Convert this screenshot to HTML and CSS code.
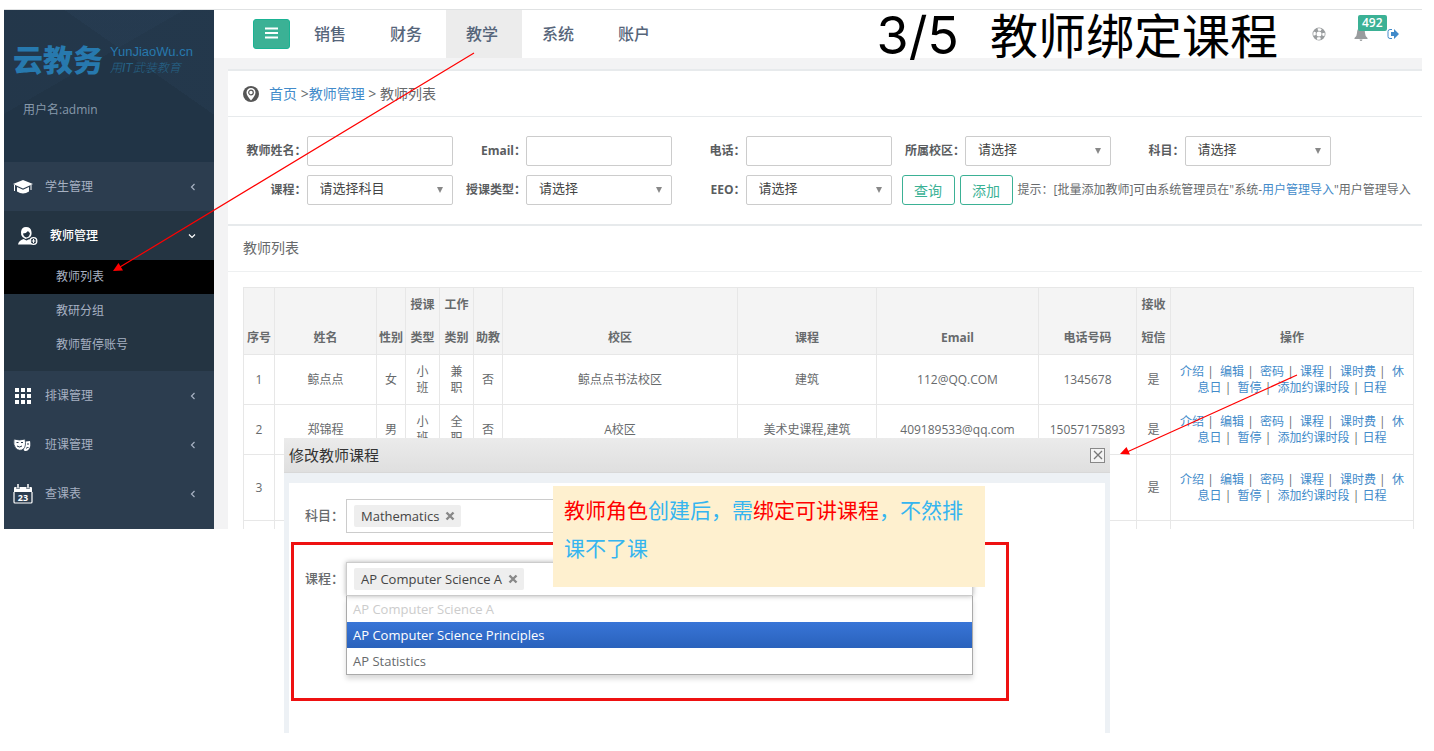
FILE: index.html
```html
<!DOCTYPE html>
<html lang="zh-CN">
  <head>
    <meta charset="UTF-8" />
    <meta name="viewport" content="width=device-width, initial-scale=1.0" />
    <title>教师列表</title>
    <link rel="stylesheet" href="styles.css">
  </head>
  <body>
    <div class="app">
      <aside class="sidebar">
        <div class="profile">
          <div class="logo">
            <strong>云教务</strong>
            <div class="slogan">
              <span>YunJiaoWu.cn</span>
              <em>用IT武装教育</em>
            </div>
          </div>
          <p class="user">用户名:admin</p>
        </div>

        <ul class="menu">
          <li>
            <a href="#">
              <svg width="20" height="16" viewBox="0 0 20 16"><path d="M10 1L0 5l10 4.500L20 5z" fill="#fff" /><path d="M4 8v4.500q6 4 12 0V8l-6 2.800z" fill="#fff" /><path d="M1.500 6v6M18 6v5" stroke="#fff" /></svg>
              学生管理
              <svg class="arrow" width="6" height="8" viewBox="0 0 6 8"><path d="M4.500 1l-3 3 3 3" /></svg>
            </a>
          </li>
          <li class="open">
            <a href="#">
              <svg width="20" height="20" viewBox="0 0 20 20"><path d="M8 1Q3.500 1 3 6q-.3 3 1.500 5l3 2 4-1.500q2.500-2 2-5.500Q13 1 8 1z" fill="#fff" /><path d="M5 7.500q3 0 5-2.500 1 1.500 2 2-.5 4-3.500 4.500Q5.500 11 5 7.500z" fill="#243442" /><path d="M0 18.500q.5-4 5.500-5.500l3 1.500 3-1.500 2 5.500z" fill="#fff" /><circle cx="15.500" cy="15" r="3.300" fill="#243442" stroke="#fff" stroke-width="1.300" /><path d="M13.500 15h4M15.500 13v4" stroke="#fff" /></svg>
              教师管理
              <svg class="arrow" width="8" height="6" viewBox="0 0 8 6"><path d="M1 1.500l3 3 3-3" /></svg>
            </a>
            <ul class="submenu">
              <li class="active"><a href="#">教师列表</a></li>
              <li><a href="#">教研分组</a></li>
              <li><a href="#">教师暂停账号</a></li>
            </ul>
          </li>
          <li>
            <a href="#">
              <svg width="20" height="18" viewBox="0 0 20 18"><path d="M1 0h4v4H1zM7 0h4v4H7zM13 0h4v4h-4zM1 6h4v4H1zM7 6h4v4H7zM13 6h4v4h-4zM1 12h4v4H1zM7 12h4v4H7zM13 12h4v4h-4z" transform="translate(1 1)" fill="#fff" /></svg>
              排课管理
              <svg class="arrow" width="6" height="8" viewBox="0 0 6 8"><path d="M4.500 1l-3 3 3 3" /></svg>
            </a>
          </li>
          <li>
            <a href="#">
              <svg width="20" height="16" viewBox="0 0 20 16"><path d="M9 5l8-1q1 5-1 8-2 3-5 1.500z" fill="#fff" /><path d="M1 2q5.500 2 11 0 1.500 7-1.500 10Q6.500 15 2.500 11 0 8 1 2z" fill="#fff" stroke="#2c3d4f" stroke-width=".8" /><path d="M3.500 5.500h2M8 5.500h2M4 9q2.500 2 5 0M14 7h2M13 11.500q1-1.500 2.500-1" stroke="#2c3d4f" fill="none" /></svg>
              班课管理
              <svg class="arrow" width="6" height="8" viewBox="0 0 6 8"><path d="M4.500 1l-3 3 3 3" /></svg>
            </a>
          </li>
          <li>
            <a href="#">
              <svg width="20" height="20" viewBox="0 0 20 20"><path d="M1 8V4q0-1 1-1h16q1 0 1 1v4z" fill="#fff" /><path d="M5 0v5M15 0v5" stroke="#2c3d4f" stroke-width="3" /><path d="M5 0v4.500M15 0v4.500" stroke="#fff" stroke-width="1.500" /><path d="M1 8v10q0 1 1 1h16q1 0 1-1V8" fill="none" stroke="#fff" stroke-width="1.200" /><text x="10" y="17" text-anchor="middle" font-size="9" font-weight="700" fill="#fff">23</text></svg>
              查课表
              <svg class="arrow" width="6" height="8" viewBox="0 0 6 8"><path d="M4.500 1l-3 3 3 3" /></svg>
            </a>
          </li>
        </ul>
      </aside>

      <main class="main">
        <header class="topbar">
          <button class="toggle" type="button" aria-label="菜单">
            <svg width="14" height="12" viewBox="0 0 14 12"><path d="M0 1.500h13M0 6h13M0 10.500h13" stroke="#fff" stroke-width="2" /></svg>
          </button>
          <nav class="nav">
            <a href="#">销售</a>
            <a href="#">财务</a>
            <a class="active" href="#">教学</a>
            <a href="#">系统</a>
            <a href="#">账户</a>
          </nav>
          <h1 class="step"><span>3/5</span>&nbsp; 教师绑定课程</h1>
          <div class="tools">
            <a href="#" aria-label="帮助"><svg width="14" height="14" viewBox="0 0 14 14" fill="none"><circle cx="7" cy="7" r="4.500" stroke="#999c9e" stroke-width="4" /><circle cx="7" cy="7" r="4.500" stroke="#fff" stroke-width="2.400" stroke-dasharray="3.530" stroke-dashoffset="1.760" /></svg></a>
            <a class="bell" href="#" aria-label="消息"><svg width="14" height="14" viewBox="0 0 14 14"><path d="M7 0q4 1 4 6 0 3 2.500 5v1H.5v-1Q3 9 3 6q0-5 4-6zM5.500 12.500h3q-.3 1.500-1.500 1.500t-1.500-1.500z" fill="#999c9e" /></svg><span class="badge">492</span></a>
            <a class="exit" href="#" aria-label="退出"><svg width="12" height="12" viewBox="0 0 12 12"><path d="M5 1.500H3Q1 1.500 1 3.500v5q0 2 2 2h2" fill="none" stroke="#428bca" /><path d="M4 4h3V1l5 5-5 5V8H4z" fill="#428bca" /></svg></a>
          </div>
        </header>

        <div class="content">
          <section class="panel">
            <div class="crumbs">
              <svg width="16" height="16" viewBox="0 0 16 16"><circle cx="8" cy="8" r="8" fill="#555" /><path d="M8 14.500Q3.500 9.500 3.500 6.500a4.500 4.500 0 0 1 9 0Q12.500 9.500 8 14.500z" fill="#fff" /><circle cx="8" cy="6.500" r="2.300" fill="none" stroke="#555" stroke-width="1.200" /></svg>
              <p><a href="#">首页</a> &gt;<a href="#">教师管理</a> &gt; 教师列表</p>
            </div>

            <form class="search">
              <div class="line">
                <div class="field"><label for="name">教师姓名：</label><input id="name" type="text"></div>
                <div class="field"><label for="email">Email：</label><input id="email" type="text"></div>
                <div class="field"><label for="phone">电话：</label><input id="phone" type="text"></div>
                <div class="field"><label for="campus">所属校区：</label><select id="campus"><option>请选择</option></select></div>
                <div class="field"><label for="subject">科目：</label><select id="subject"><option>请选择</option></select></div>
              </div>
              <div class="line">
                <div class="field"><label for="course">课程：</label><select id="course"><option>请选择科目</option></select></div>
                <div class="field"><label for="type">授课类型：</label><select id="type"><option>请选择</option></select></div>
                <div class="field"><label for="eeo">EEO：</label><select id="eeo"><option>请选择</option></select></div>
                <div class="actions">
                  <button type="button">查询</button>
                  <button type="button">添加</button>
                  <span>提示：[批量添加教师]可由系统管理员在"系统-<a href="#">用户管理导入</a>"用户管理导入</span>
                </div>
              </div>
            </form>
          </section>

          <section class="panel list">
            <h2>教师列表</h2>
            <div class="tablebox">
              <table>
                <colgroup>
                  <col class="c-no"><col class="c-name"><col class="c-sex"><col class="c-type"><col class="c-type"><col class="c-sex"><col><col class="c-course"><col class="c-email"><col class="c-phone"><col class="c-type"><col class="c-ops">
                </colgroup>
                <thead>
                  <tr>
                    <th>序号</th>
                    <th>姓名</th>
                    <th>性别</th>
                    <th>授课<br>类型</th>
                    <th>工作<br>类别</th>
                    <th>助教</th>
                    <th>校区</th>
                    <th>课程</th>
                    <th>Email</th>
                    <th>电话号码</th>
                    <th>接收<br>短信</th>
                    <th>操作</th>
                  </tr>
                </thead>
                <tbody>
                  <tr>
                    <td>1</td>
                    <td>鲸点点</td>
                    <td>女</td>
                    <td>小<br>班</td>
                    <td>兼<br>职</td>
                    <td>否</td>
                    <td>鲸点点书法校区</td>
                    <td>建筑</td>
                    <td>112@QQ.COM</td>
                    <td>1345678</td>
                    <td>是</td>
                    <td class="ops"><a href="#">介绍</a> |&nbsp; <a href="#">编辑</a> |&nbsp; <a href="#">密码</a> |&nbsp; <a href="#">课程</a> |&nbsp; <a href="#">课时费</a> |&nbsp; <a href="#">休息日</a> |&nbsp; <a href="#">暂停</a> |&nbsp; <a href="#">添加约课时段</a> | <a href="#">日程</a></td>
                  </tr>
                  <tr>
                    <td>2</td>
                    <td>郑锦程</td>
                    <td>男</td>
                    <td>小<br>班</td>
                    <td>全<br>职</td>
                    <td>否</td>
                    <td>A校区</td>
                    <td>美术史课程,建筑</td>
                    <td>409189533@qq.com</td>
                    <td>15057175893</td>
                    <td>是</td>
                    <td class="ops"><a href="#">介绍</a> |&nbsp; <a href="#">编辑</a> |&nbsp; <a href="#">密码</a> |&nbsp; <a href="#">课程</a> |&nbsp; <a href="#">课时费</a> |&nbsp; <a href="#">休息日</a> |&nbsp; <a href="#">暂停</a> |&nbsp; <a href="#">添加约课时段</a> | <a href="#">日程</a></td>
                  </tr>
                  <tr class="tall">
                    <td>3</td>
                    <td></td>
                    <td></td>
                    <td></td>
                    <td></td>
                    <td></td>
                    <td></td>
                    <td></td>
                    <td></td>
                    <td></td>
                    <td>是</td>
                    <td class="ops"><a href="#">介绍</a> |&nbsp; <a href="#">编辑</a> |&nbsp; <a href="#">密码</a> |&nbsp; <a href="#">课程</a> |&nbsp; <a href="#">课时费</a> |&nbsp; <a href="#">休息日</a> |&nbsp; <a href="#">暂停</a> |&nbsp; <a href="#">添加约课时段</a> | <a href="#">日程</a></td>
                  </tr>
                  <tr class="rest">
                    <td></td><td></td><td></td><td></td><td></td><td></td><td></td><td></td><td></td><td></td><td></td><td></td>
                  </tr>
                </tbody>
              </table>
            </div>
          </section>
        </div>
      </main>
    </div>

    <div class="modal" role="dialog" aria-labelledby="modal-title">
      <div class="modal-head">
        <h3 id="modal-title">修改教师课程</h3>
        <button type="button" aria-label="关闭"><svg width="10" height="10" viewBox="0 0 10 10"><path d="M1 1l8 8M9 1L1 9" stroke="#777" stroke-width="1.300" /></svg></button>
      </div>
      <div class="modal-body">
        <div class="row">
          <label for="m-subject">科目：</label>
          <div class="chosen">
            <span class="chip">Mathematics <button type="button" aria-label="移除"><svg width="10" height="10" viewBox="0 0 10 10"><path d="M1.500 1.500l7 7M8.500 1.500l-7 7" /></svg></button></span>
            <input id="m-subject" type="text">
          </div>
        </div>
        <div class="row marked">
          <label for="m-course">课程：</label>
          <div class="picker">
            <div class="chosen focus">
              <span class="chip">AP Computer Science A <button type="button" aria-label="移除"><svg width="10" height="10" viewBox="0 0 10 10"><path d="M1.500 1.500l7 7M8.500 1.500l-7 7" /></svg></button></span>
              <input id="m-course" type="text">
            </div>
            <ul class="options">
              <li class="used">AP Computer Science A</li>
              <li class="hover">AP Computer Science Principles</li>
              <li>AP Statistics</li>
            </ul>
          </div>
        </div>
      </div>
    </div>

    <p class="note"><b>教师角色</b>创建后，需<b>绑定可讲课程</b>，不然排课不了课</p>

    <svg class="lines" width="1434" height="751" viewBox="0 0 1434 751">
      <path d="M474 53L120 267M1297 375L1127 452" stroke="#f00" stroke-width="1.200" />
      <path d="M113 271l5.500-8 4.500 7.500zM1120 454l6.500-7 3.500 7.500z" fill="#f00" />
    </svg>
  </body>
</html>
```

FILE: styles.css
```css
* {
  box-sizing: border-box;
  margin: 0;
  padding: 0;
}

body {
  position: relative;
  min-height: 100vh;
  padding: 9px 12px 0 4px;
  background: #fff;
  color: #676a6c;
  font-family: "Open Sans", "Noto Sans CJK SC", sans-serif;
  font-size: 12px;
  line-height: 16px;
}

ul {
  list-style: none;
}

a {
  color: #428bca;
  text-decoration: none;
}

button,
input,
select {
  font-family: inherit;
}

.app {
  display: grid;
  grid-template-columns: 210px 1fr;
  border-top: 1px solid #e0e2e3;
}

/* sidebar */
.sidebar {
  padding-bottom: 11px;
  background: #2c3d4f;
}

.profile {
  height: 152px;
  padding: 32px 8px 0 9px;
  background:
    linear-gradient(35deg, transparent 65%, rgba(60, 90, 125, 0.1) 65%),
    linear-gradient(150deg, rgba(60, 90, 125, 0.08) 38%, transparent 38%),
    #213446;
}

.logo {
  display: flex;
  align-items: center;
  gap: 7px;
  color: #2779ae;
}

.logo strong {
  font-size: 30px;
  font-weight: 900;
  line-height: 36px;
}

.slogan {
  font-family: "Liberation Sans", "Noto Sans CJK SC", sans-serif;
  font-size: 13px;
}

.slogan span,
.slogan em {
  display: block;
  white-space: nowrap;
}

.slogan em {
  color: #266489;
  font-size: 12px;
  font-weight: 300;
}

.user {
  padding: 24px 10px 0;
  color: #8799ab;
}

.menu a {
  display: flex;
  align-items: center;
  gap: 12px;
  height: 49px;
  padding: 0 18px 0 9px;
  color: #a7b1c2;
}

.menu .arrow {
  margin-left: auto;
  fill: none;
  stroke: #a7b1c2;
  stroke-width: 1.2;
}

.menu .open {
  padding-bottom: 9px;
  background: #243442;
}

.menu .open > a {
  padding-left: 14px;
  color: #fff;
  font-weight: 500;
}

.menu .open .arrow {
  stroke: #fff;
}

.menu .submenu a {
  height: 34px;
  padding-left: 52px;
}

.submenu .active {
  background: #000;
}

/* top bar */
.topbar {
  display: flex;
  align-items: center;
  height: 48px;
  padding: 0 23px 0 39px;
}

.toggle {
  width: 37px;
  height: 30px;
  margin-right: 4px;
  border: 1px solid #1ab394;
  border-radius: 3px;
  background: #3bb195;
}

.nav {
  display: flex;
}

.nav a {
  padding: 0 24px 0 20px;
  color: #56657a;
  font-size: 16px;
  font-weight: 500;
  line-height: 48px;
}

.nav .active {
  background: #ececec;
}

.step {
  margin-left: auto;
  padding-top: 4px;
  color: #000;
  font-family: Inter, "Noto Sans CJK SC", sans-serif;
  font-size: 48px;
  font-weight: 400;
  line-height: 48px;
  white-space: nowrap;
}

.step span {
  padding-right: 4px;
  font-size: 52px;
}

.tools {
  display: flex;
  align-items: center;
  margin-left: 34px;
}

.tools a {
  display: flex;
}

.tools .bell {
  position: relative;
  margin-left: 28px;
}

.tools .exit {
  margin-left: 19px;
}

.badge {
  position: absolute;
  top: -12px;
  left: 4px;
  padding: 0 4px;
  border-radius: 2px;
  background: #3bb195;
  color: #fff;
  font-weight: 600;
}

/* content */
.content {
  padding: 11px 0 0 14px;
  background: #f3f3f4;
}

.panel {
  border-top: 2px solid #e7eaec;
  background: #fff;
}

.crumbs {
  display: flex;
  align-items: center;
  gap: 10px;
  height: 46px;
  padding: 0 15px;
  border-bottom: 1px solid #e7eaec;
  font-size: 14px;
}

.search {
  display: grid;
  gap: 9px;
  padding: 19px 0 19px 5px;
}

.line {
  display: grid;
  grid-template-columns: repeat(5, 24fr) 10fr;
}

.field {
  display: flex;
  align-items: center;
  justify-content: flex-end;
}

.field label {
  color: #5a5d5f;
  font-weight: 700;
}

.field input,
.field select {
  width: 146px;
  height: 30px;
  padding: 0 12px;
  border: 1px solid #ccc;
  border-radius: 2px;
  background: #fff;
  color: #444;
  font-size: 13px;
}

.field select {
  padding-bottom: 4px;
  appearance: none;
  background: #fff url("data:image/svg+xml,%3Csvg xmlns='http://www.w3.org/2000/svg' width='8' height='6'%3E%3Cpath d='M1 0h6L4 6z' fill='%23888'/%3E%3C/svg%3E") no-repeat right 8px center;
}

.actions {
  display: flex;
  grid-column: 4 / 7;
  align-items: center;
  gap: 5px;
  padding-left: 10px;
  white-space: nowrap;
}

.actions button {
  width: 53px;
  height: 30px;
  border: 1px solid #3bb195;
  border-radius: 3px;
  background: #fff;
  color: #3bb195;
  font-size: 14px;
}

.list h2 {
  height: 46px;
  padding: 0 15px;
  border-bottom: 1px solid #eef0f1;
  font-size: 14px;
  font-weight: 400;
  line-height: 44px;
}

.tablebox {
  padding: 15px 8px 0 15px;
}

table {
  width: 100%;
  border-collapse: collapse;
  table-layout: fixed;
}

.c-no { width: 31px; }
.c-name { width: 102px; }
.c-sex { width: 29px; }
.c-type { width: 34px; }
.c-course { width: 139px; }
.c-email { width: 162px; }
.c-phone { width: 98px; }
.c-ops { width: 243px; }

th,
td {
  border: 1px solid #e7e7e7;
  text-align: center;
}

th {
  background: #f4f4f4;
  font-weight: 700;
  line-height: 33px;
  vertical-align: bottom;
}

td {
  height: 50px;
}

.tall td {
  height: 66px;
}

.rest td {
  height: 8px;
  border-bottom: 0;
}

.ops {
  padding: 0 8px;
}

/* dialog */
.modal {
  position: absolute;
  top: 438px;
  left: 284px;
  right: 324px;
  background: #edf1f5;
}

.modal-head {
  display: flex;
  align-items: center;
  justify-content: space-between;
  height: 35px;
  padding: 0 5px;
  border-bottom: 1px solid #d8d8d8;
  background: linear-gradient(#ebebeb, #dfdfdf);
}

.modal-head h3 {
  color: #333;
  font-size: 15px;
  font-weight: 400;
}

.modal-head button {
  display: flex;
  align-items: center;
  justify-content: center;
  width: 15px;
  height: 15px;
  border: 1px solid #888;
  background: #f3f3f3;
}

.modal-body {
  margin: 10px 5px 0;
  padding: 16px 96px 32px 2px;
  background: #fff;
}

.row {
  display: flex;
  padding: 0 36px 0 14px;
}

.row label {
  width: 41px;
  font-size: 13px;
  font-weight: 500;
  line-height: 32px;
}

.chosen {
  display: flex;
  flex: 1;
  align-items: center;
  height: 34px;
  padding: 0 7px;
  border: 1px solid #ccc;
}

.chosen input {
  flex: 1;
  min-width: 0;
  border: 0;
  outline: 0;
}

.focus {
  box-shadow: 0 0 5px rgba(0, 0, 0, 0.3);
}

.chip {
  display: flex;
  align-items: center;
  gap: 6px;
  height: 22px;
  padding: 0 6px 0 7px;
  border-radius: 2px;
  background: #eee;
  color: #444;
  font-size: 13px;
}

.chip button {
  display: flex;
  border: 0;
  background: none;
}

.chip path {
  stroke: #888;
  stroke-width: 2.4;
}

.marked {
  margin-top: 9px;
  padding: 17px 33px 23px 11px;
  border: 3px solid #ee1111;
}

.picker {
  flex: 1;
}

.options {
  border: 1px solid #aaa;
  border-top: 0;
  box-shadow: 0 4px 5px rgba(0, 0, 0, 0.15);
}

.options li {
  height: 26px;
  padding: 0 6px;
  font-size: 13px;
  line-height: 26px;
}

.options .used {
  color: #ccc;
}

.options .hover {
  background: linear-gradient(#3875d7, #2a62bc);
  color: #fff;
}

/* annotations */
.note {
  position: absolute;
  top: 486px;
  left: 553px;
  width: 432px;
  padding: 4px 11px 21px;
  background: #fef0cf;
  color: #35b5ef;
  font-family: "Noto Sans CJK SC", sans-serif;
  font-size: 21px;
  line-height: 38px;
}

.note b {
  color: #f00;
  font-weight: 400;
}

.lines {
  position: absolute;
  top: 0;
  left: 0;
  pointer-events: none;
}
```
